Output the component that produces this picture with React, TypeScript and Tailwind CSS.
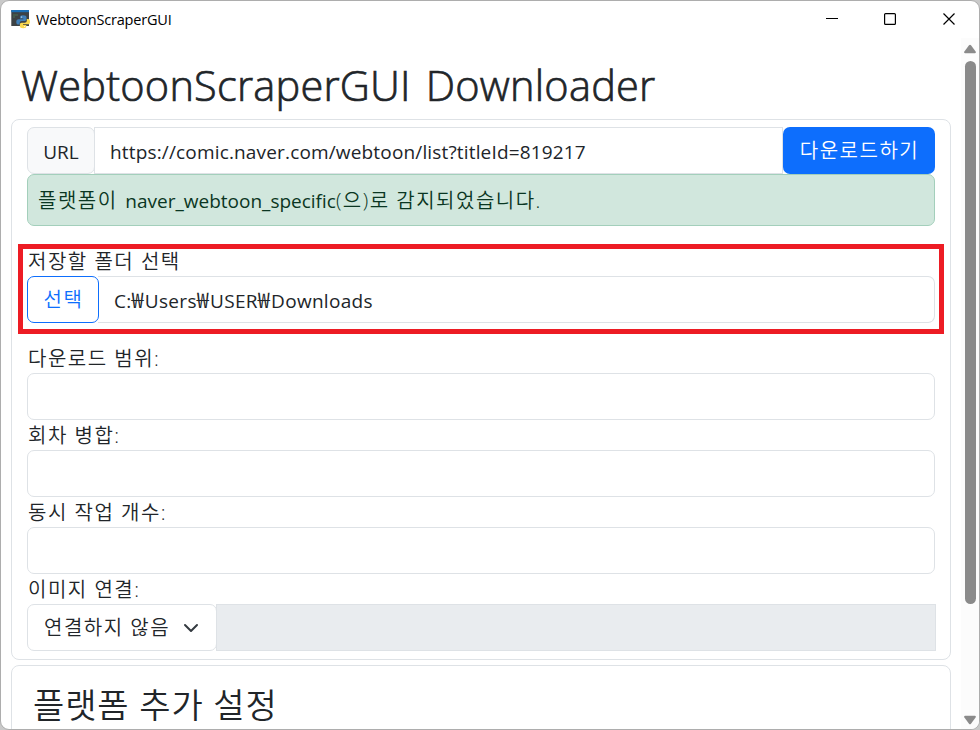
import type { ReactNode } from "react";

function PythonWindowIcon() {
  return (
    <svg width="20" height="20" viewBox="0 0 20 20" className="shrink-0">
      <rect x="0.3" y="0" width="17.7" height="16" fill="#3d4245" />
      <rect x="0.3" y="0" width="17.7" height="2.2" fill="#1b6fb5" />
      <path d="M2 5h5M2 7h2" stroke="#4f7f55" strokeWidth="0.8" />
      <path d="M12 5.2c-2.3 0-3 .8-3 2v1.4h3.3v.6H7.6c-1.500 0-2.300 1-2.300 2.700s.8 2.700 2.100 2.700h1.300v-1.700c0-1.300.9-2 2.100-2h3c1.100 0 1.700-.8 1.700-1.800V7.200c0-1.200-1-2-3.500-2z" fill="#3f7fb8" />
      <path d="M12.300 18.200c2.300 0 3-.8 3-2v-1.300H12v-.6h5c1.400 0 2-1 2-2.600s-.7-2.700-2-2.700h-1.200v1.700c0 1.200-.9 2-2.100 2h-3c-1.100 0-1.800.8-1.800 1.800v1.700c0 1.200 1 2 3.400 2z" fill="#fbd94e" />
      <circle cx="10.600" cy="7" r="0.600" fill="#fff" />
      <circle cx="13.700" cy="16.500" r="0.600" fill="#fff" />
    </svg>
  );
}

function TitleBar() {
  return (
    <header className="flex h-[37px] shrink-0 items-center pl-[10px] text-black">
      <PythonWindowIcon />
      <span className="ml-[5px] text-[14.500px] tracking-[-0.2px] whitespace-nowrap">WebtoonScraperGUI</span>
      <div className="ml-auto flex items-center">
        <svg width="153" height="37" viewBox="0 0 153 37" fill="none" stroke="#000" strokeWidth="1.200">
          <path d="M0 17.500h12" />
          <rect x="58.600" y="12.600" width="10.800" height="10.800" rx="1" />
          <path d="M117.500 12.500l11 11M128.500 12.500l-11 11" />
        </svg>
      </div>
    </header>
  );
}

function Ko({ children }: { children: ReactNode }) {
  return <span className="text-[20px] font-[350] tracking-[1.5px]">{children}</span>;
}

function Won() {
  return <span className="text-[22px] leading-none font-[350] tracking-[1.2px]">₩</span>;
}

function Label({ children }: { children: ReactNode }) {
  return (
    <div className="flex h-[30px] items-center pt-[2px] pl-px whitespace-nowrap">
      <Ko>{children}</Ko>
    </div>
  );
}

function Field({ label }: { label: string }) {
  return (
    <div>
      <Label>{label}</Label>
      <div className="h-[47px] rounded-[7px] border border-[#dee2e6]" />
    </div>
  );
}

function ScrollBar() {
  return (
    <div className="flex w-[18px] shrink-0 flex-col items-center bg-[#fcfcfc]">
      <svg width="14" height="10" viewBox="0 0 14 10" className="mt-[6px] shrink-0">
        <path d="M6 1.300Q7 0 8 1.300L12.600 7.500Q13.500 9.300 12 9.300H2Q.5 9.300 1.400 7.500Z" fill="#8a8a8a" />
      </svg>
      <div className="mt-[7px] h-[543px] w-[11px] shrink-0 rounded-full bg-[#8a8a8a]" />
      <svg width="14" height="10" viewBox="0 0 14 10" className="mt-auto mb-[4px] shrink-0">
        <path d="M6 8.700Q7 10 8 8.700L12.600 2.500Q13.500.700 12 .700H2Q.5.700 1.400 2.500Z" fill="#8a8a8a" />
      </svg>
    </div>
  );
}

export default function App() {
  return (
    <div className="h-[730px] w-[980px] overflow-hidden bg-[#c9c9c9] font-['Open_Sans','Noto_Sans_CJK_KR',sans-serif] text-[#212529]">
      <div className="flex h-full flex-col overflow-hidden rounded-[9px] border border-[#adadad] bg-white">
        <TitleBar />
        <div className="flex min-h-0 flex-1">
          <main className="min-w-0 flex-1 overflow-hidden pl-[10px] text-[19px]">
            <h1 className="flex h-[81px] items-center pt-[14px] pl-[10px] text-[41.500px] font-light whitespace-nowrap">
              <span className="tracking-[0.22px] [-webkit-text-stroke:0.7px_#212529] [word-spacing:4px]">WebtoonScraperGUI Downloader</span>
            </h1>
            <section className="relative h-[541px] w-[940px] rounded-[8px] border border-[#dee2e6] px-[15px] pt-[7px]">
              <div className="flex h-[47px]">
                <div className="flex w-[68px] items-center justify-center rounded-[7px] border border-[#dee2e6] bg-[#f8f9fa] pt-[4px]">
                  <span>URL</span>
                </div>
                <div className="-ml-px flex flex-1 items-center border border-[#dee2e6] pt-[4px] pl-[15px] whitespace-nowrap">
                  <span className="tracking-[0.16px]">https://comic.naver.com/webtoon/list?titleId=819217</span>
                </div>
                <button className="w-[152px] rounded-[7px] bg-[#0d6efd] pt-px pl-px text-white">
                  <Ko>다운로드하기</Ko>
                </button>
              </div>
              <div className="flex h-[52px] items-center rounded-[7px] border border-[#a3cfbb] bg-[#d1e7dd] pt-px pl-[10px] whitespace-nowrap text-[#0a3622]">
                <Ko>플랫폼이&nbsp;</Ko>
                <span className="pt-[2px] pl-px">naver_webtoon_specific</span>
                <Ko>(으)로 감지되었습니다.</Ko>
              </div>
              <div className="mt-[20px]">
                <Label>저장할 폴더 선택</Label>
                <div className="flex h-[47px]">
                  <button className="w-[72px] rounded-[7px] border border-[#0d6efd] pt-px pl-px text-[#0d6efd]">
                    <Ko>선택</Ko>
                  </button>
                  <div className="-ml-px flex flex-1 items-center rounded-r-[7px] border border-l-0 border-[#dee2e6] pt-[4px] pl-[16px]">
                    <span className="tracking-[0.3px]">C:<Won />Users<Won />USER<Won />Downloads</span>
                  </div>
                </div>
              </div>
              <div className="mt-[20px]">
                <Field label="다운로드 범위:" />
                <Field label="회차 병합:" />
                <Field label="동시 작업 개수:" />
                <Label>이미지 연결:</Label>
                <div className="-mr-px flex h-[47px]">
                  <div className="flex w-[190px] items-center rounded-[7px] border border-[#dee2e6] pl-[16px] whitespace-nowrap">
                    <Ko>연결하지 않음</Ko>
                    <svg width="16" height="16" viewBox="0 0 16 16" className="mr-[17px] ml-auto" fill="none" stroke="#343a40" strokeWidth="2" strokeLinecap="round" strokeLinejoin="round">
                      <path d="M2 5l6 6 6-6" />
                    </svg>
                  </div>
                  <div className="-ml-px flex-1 border border-[#dee2e6] bg-[#e9ecef]" />
                </div>
              </div>
              <div className="absolute top-[124px] left-[6px] h-[90px] w-[926px] border-[5px] border-[#ed1c24]" />
            </section>
            <section className="mt-[5px] h-[100px] w-[940px] rounded-t-[8px] border border-[#dee2e6] px-[21px] pt-[14px]">
              <h2 className="text-[34px] leading-[50px] whitespace-nowrap">
                <span className="font-[350] tracking-[0.9px]">플랫폼 추가 설정</span>
              </h2>
            </section>
          </main>
          <ScrollBar />
        </div>
      </div>
    </div>
  );
}
